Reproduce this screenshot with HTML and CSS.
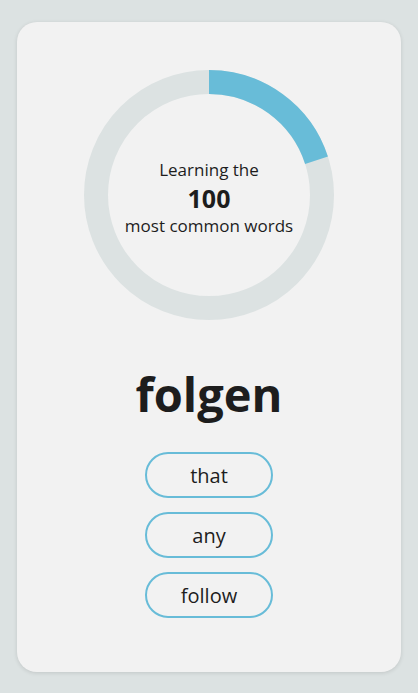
FILE: index.html
```html
<!DOCTYPE html>
<html lang="en">
<head>
<meta charset="utf-8">
<link rel="stylesheet" href="styles.css">
</head>
<body>
<main class="card">
  <div class="ring">
    <svg class="ring-svg" width="250" height="250" viewBox="0 0 250 250">
      <circle cx="125" cy="125" r="113" fill="none" stroke="#dce2e2" stroke-width="24"/>
      <circle cx="125" cy="125" r="113" fill="none" stroke="#68bcd8" stroke-width="24"
        stroke-dasharray="142 1000" transform="rotate(-90 125 125)"/>
    </svg>
    <div class="ring-text">
      <div class="ring-line">Learning the</div>
      <div class="ring-num">100</div>
      <div class="ring-line">most common words</div>
    </div>
  </div>
  <h1 class="word">folgen</h1>
  <div class="options">
    <button class="opt">that</button>
    <button class="opt">any</button>
    <button class="opt">follow</button>
  </div>
</main>
</body>
</html>
```
FILE: styles.css
```css
* { box-sizing: border-box; }
html, body { margin: 0; padding: 0; }
body {
  background: #dce2e2;
  font-family: "Open Sans", "Noto Sans", sans-serif;
  color: #1d1d1d;
  padding: 22px 17px 21px;
}
.card {
  background: #f2f2f2;
  border-radius: 20px;
  height: 650px;
  box-shadow: 0 1px 4px rgba(0,0,0,0.12);
  display: flex;
  flex-direction: column;
  align-items: center;
  padding-top: 48px;
}
.ring {
  position: relative;
  width: 250px;
  height: 250px;
}
.ring-svg { display: block; }
.ring-text {
  position: absolute;
  inset: 0;
  display: flex;
  flex-direction: column;
  align-items: center;
  justify-content: center;
  text-align: center;
  padding-top: 6px;
}
.ring-line { font-size: 17px; line-height: 28px; }
.ring-num { font-size: 25px; font-weight: 700; line-height: 28px; }
.word {
  margin: 44px 0 0;
  font-size: 47px;
  font-weight: 700;
  line-height: 60px;
}
.options {
  margin-top: 28px;
  display: flex;
  flex-direction: column;
  gap: 14px;
}
.opt {
  width: 128px;
  height: 46px;
  border: 2px solid #68bcd8;
  border-radius: 23px;
  background: transparent;
  font-family: inherit;
  font-size: 20px;
  color: #1d1d1d;
  padding: 0;
}
```
